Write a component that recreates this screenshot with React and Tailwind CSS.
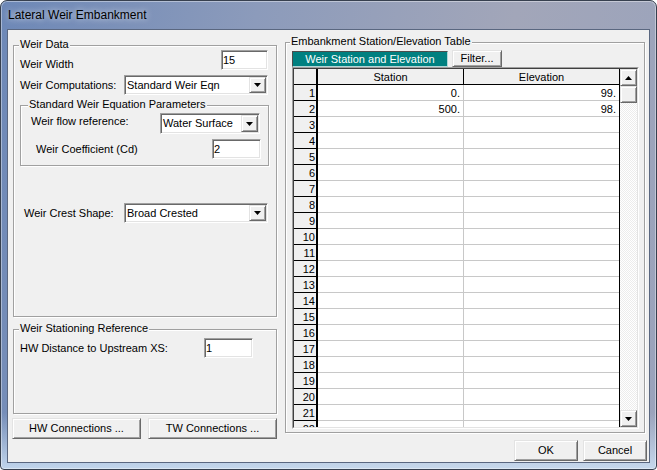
import React from 'react';

const FONT = "font-['Liberation_Sans',Arial,sans-serif]";
const sunken =
  'border border-t-[#a0a0a0] border-l-[#a0a0a0] border-r-white border-b-white shadow-[inset_1px_1px_0_#696969,inset_-1px_-1px_0_#e3e3e3]';
const raised =
  'border border-t-[#e3e3e3] border-l-[#e3e3e3] border-r-[#696969] border-b-[#696969] shadow-[inset_1px_1px_0_#fff,inset_-1px_-1px_0_#a0a0a0]';

function Down() {
  return (
    <svg width="7" height="4" viewBox="0 0 7 4">
      <path d="M0 0h7L3.5 4z" fill="#000" />
    </svg>
  );
}

function Up() {
  return (
    <svg width="7" height="4" viewBox="0 0 7 4">
      <path d="M0 4h7L3.5 0z" fill="#000" />
    </svg>
  );
}

function TextBox({ value, className }) {
  return (
    <div className={`${sunken} bg-white pl-px flex items-center ${className}`}>{value}</div>
  );
}

function Combo({ value, className }) {
  return (
    <div className={`${sunken} bg-white flex items-stretch ${className}`}>
      <div className="flex-1 pl-[2px] flex items-center">{value}</div>
      <div className={`${raised} bg-[#f0f0f0] w-[17px] my-px mr-px flex items-center justify-center`}>
        <Down />
      </div>
    </div>
  );
}

function Button({ children, className }) {
  return (
    <div className={`${raised} bg-[#f0f0f0] flex items-center justify-center ${className}`}>{children}</div>
  );
}

function Group({ label, labelLeft, className, children }) {
  return (
    <div className={`relative border border-[#a0a0a0] shadow-[inset_1px_1px_0_#fff,1px_1px_0_#fff] ${className}`}>
      <div className={`absolute -top-[8px] bg-[#f0f0f0] px-px leading-[13px] whitespace-nowrap ${labelLeft}`}>
        {label}
      </div>
      {children}
    </div>
  );
}

const rows = [
  ['0.', '99.'],
  ['500.', '98.'],
];

function Table() {
  const list = Array.from({ length: 22 }, (_, i) => i + 1);
  return (
    <div className="w-[347px] h-[362px] border border-t-[#a0a0a0] border-l-[#a0a0a0] border-r-white border-b-white">
      <div className="w-full h-full flex bg-white border border-t-[#404040] border-l-[#404040] border-r-[#e3e3e3] border-b-[#e3e3e3]">
        <div className="w-[326px] h-full overflow-hidden border-r border-black">
          <div className="flex h-[16px] bg-[#f0f0f0] border-b border-black leading-[15px]">
            <div className="w-[24px] border-r-2 border-black" />
            <div className="w-[146px] border-r border-black text-center pt-px">Station</div>
            <div className="flex-1 text-center pt-px">Elevation</div>
          </div>
          {list.map((n) => {
            const r = rows[n - 1] || ['', ''];
            return (
              <div key={n} className="flex h-[16px] leading-[15px]">
                <div className="w-[24px] shrink-0 bg-[#f0f0f0] border-r-2 border-b border-black text-right pr-px pt-px">
                  {n}
                </div>
                <div className="w-[146px] shrink-0 border-r border-b border-[#c8c8c8] text-right pr-[3px] pt-px">
                  {r[0]}
                </div>
                <div className="flex-1 border-b border-[#c8c8c8] text-right pr-[3px] pt-px">{r[1]}</div>
              </div>
            );
          })}
        </div>
        <div className="w-[17px] h-full flex flex-col">
          <div className={`${raised} bg-[#f0f0f0] h-[17px] flex items-center justify-center`}>
            <Up />
          </div>
          <div className={`${raised} bg-[#f0f0f0] h-[17px]`} />
          <div className="flex-1 bg-[repeating-conic-gradient(#ececec_0%_25%,#fff_0%_50%)] bg-[length:2px_2px]" />
          <div className={`${raised} bg-[#f0f0f0] h-[17px] flex items-center justify-center`}>
            <Down />
          </div>
        </div>
      </div>
    </div>
  );
}

export default function App() {
  return (
    <div className={`w-[657px] h-[470px] ${FONT} text-[11px] leading-[13px] text-black`}>
      <div className="w-full h-full flex flex-col rounded-t-[7px] rounded-b-[4px] border border-[#37404f] bg-[linear-gradient(180deg,rgba(255,255,255,0)_0%,rgba(255,255,255,0)_88%,rgba(205,225,245,0.85)_100%),linear-gradient(100deg,#6d88b7_0%,#8c9bbb_35%,#a2a6b9_70%,#9aa3bc_100%)] shadow-[inset_0_0_0_1px_rgba(255,255,255,0.4)] px-[6px] pb-[6px]">
        <div className="h-[28px] pl-px pt-[7px] text-[12px] leading-[14px] [text-shadow:0_0_6px_rgba(255,255,255,0.9)]">
          Lateral Weir Embankment
        </div>
        <div className="flex-1 flex border border-[#5a6780] bg-[#f0f0f0]">
          {/* left column */}
          <div className="ml-[4px] w-[266px] flex flex-col">
            <Group label="Weir Data" labelLeft="left-[5px]" className="mt-[15px] ml-px w-[264px] h-[272px] pl-[6px]">
              <div className="mt-[4px] flex h-[20px] items-start">
                <div className="w-[201px] pt-[8px]">Weir Width</div>
                <TextBox value="15" className="w-[47px] h-[20px]" />
              </div>
              <div className="mt-[5px] flex h-[20px] items-center">
                <div className="w-[104px]">Weir Computations:</div>
                <Combo value="Standard Weir Eqn" className="w-[144px] h-[20px]" />
              </div>
              <Group
                label="Standard Weir Equation Parameters"
                labelLeft="left-[7px]"
                className="mt-[10px] w-[249px] h-[61px]"
              >
                <div className="mt-[7px] flex h-[21px] items-start">
                  <div className="w-[139px] pl-[10px] pt-[2px]">Weir flow reference:</div>
                  <Combo value="Water Surface" className="w-[100px] h-[21px]" />
                </div>
                <div className="mt-[5px] flex h-[20px] items-center">
                  <div className="w-[191px] pl-[15px]">Weir Coefficient (Cd)</div>
                  <TextBox value="2" className="w-[49px] h-[20px]" />
                </div>
              </Group>
              <div className="mt-[37px] flex h-[20px] items-center">
                <div className="w-[104px] pl-[4px]">Weir Crest Shape:</div>
                <Combo value="Broad Crested" className="w-[144px] h-[20px]" />
              </div>
            </Group>

            <Group
              label="Weir Stationing Reference"
              labelLeft="left-[5px]"
              className="mt-[12px] ml-px w-[264px] h-[85px] pl-[6px]"
            >
              <div className="mt-[8px] flex h-[20px] items-center">
                <div className="w-[184px]">HW Distance to Upstream XS:</div>
                <TextBox value="1" className="w-[49px] h-[20px]" />
              </div>
            </Group>

            <div className="mt-[4px] flex gap-[7px]">
              <Button className="w-[129px] h-[21px]">HW Connections ...</Button>
              <Button className="w-[129px] h-[21px]">TW Connections ...</Button>
            </div>
          </div>

          {/* right column */}
          <div className="ml-[7px] w-[362px] flex flex-col">
            <Group
              label="Embankment Station/Elevation Table"
              labelLeft="left-[4px]"
              className="mt-[12px] w-[360px] h-[391px] pl-[6px] pr-[5px]"
            >
              <div className="mt-[7px] h-[17px] flex gap-[4px]">
                <div className="self-end w-[156px] h-[16px] bg-[#008080] text-white flex items-center justify-center border border-t-[#4d4d4d] border-l-[#4d4d4d] border-r-[#b0d8d8] border-b-[#b0d8d8]">
                  Weir Station and Elevation
                </div>
                <Button className="w-[50px] h-[17px]">Filter...</Button>
              </div>
              <Table />
            </Group>
            <div className="mt-[7px] flex justify-end gap-[5px]">
              <Button className="w-[64px] h-[21px]">OK</Button>
              <Button className="w-[64px] h-[21px]">Cancel</Button>
            </div>
          </div>
        </div>
      </div>
    </div>
  );
}
